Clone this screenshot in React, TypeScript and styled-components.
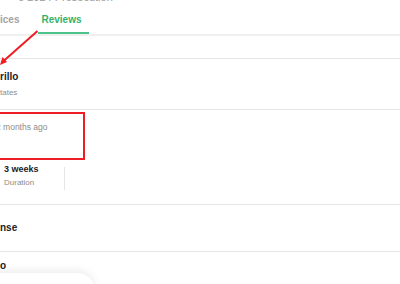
import React from "react";
import styled, { createGlobalStyle } from "styled-components";

const Global = createGlobalStyle`
  html, body { margin: 0; padding: 0; background: #ffffff; }
  body { overflow: hidden; font-family: "Liberation Sans", Arial, sans-serif; }
  #root { width: 400px; height: 284px; overflow: hidden; }
`;

const Page = styled.div`
  position: relative;
  width: 400px;
  height: 284px;
  overflow: hidden;
  display: flex;
  flex-direction: column;
`;

const TopLine = styled.div`
  margin-top: -9px;
  padding-left: 18px;
  font-size: 11px;
  line-height: 13px;
  color: #9a9a9a;
  white-space: nowrap;
`;

const TabBar = styled.div`
  display: flex;
  align-items: flex-end;
  gap: 19px;
  border-bottom: 2px solid #f0f0f0;
`;

const Tab = styled.div<{ $active?: boolean }>`
  padding: 8.5px ${(p) => (p.$active ? "7px" : "0")} 5.5px ${(p) => (p.$active ? "3px" : "0")};
  font-size: 10px;
  line-height: 14px;
  font-weight: 700;
  color: ${(p) => (p.$active ? "#34b36c" : "#a3a3a3")};
  border-bottom: 2px solid ${(p) => (p.$active ? "#4cc489" : "transparent")};
`;

const Blank = styled.div<{ $h: number }>`
  height: ${(p) => p.$h}px;
  border-bottom: 1px solid #e6e6e6;
  flex: none;
`;

const InfoRow = styled.div`
  display: flex;
  flex-direction: column;
  gap: 3.5px;
  padding: 10.5px 0 9.9px;
  border-bottom: 1px solid #e6e6e6;
  flex: none;
`;

const Title = styled.div`
  font-size: 10px;
  line-height: 14px;
  font-weight: 700;
  color: #222;
  white-space: nowrap;
`;

const Sub = styled.div`
  font-size: 8px;
  line-height: 12px;
  color: #8c8c8c;
  white-space: nowrap;
`;

const ReviewSection = styled.div`
  height: 95px;
  box-sizing: border-box;
  padding-top: 2px;
  border-bottom: 1px solid #e6e6e6;
  flex: none;
`;

const HighlightBox = styled.div`
  box-sizing: border-box;
  width: 97px;
  height: 48px;
  margin-left: -12px;
  padding: 7px 6px;
  border: 2px solid #ee1c24;
`;

const DateText = styled.div`
  font-size: 8.5px;
  line-height: 12px;
  color: #8c8c8c;
  white-space: nowrap;
`;

const StatsRow = styled.div`
  display: flex;
  margin-top: 3.5px;
`;

const Stat = styled.div`
  width: 60px;
  padding-left: 4px;
  display: flex;
  flex-direction: column;
  gap: 1.5px;
`;

const StatValue = styled.div`
  font-size: 9px;
  line-height: 12px;
  font-weight: 700;
  color: #222;
  white-space: nowrap;
`;

const StatLabel = styled.div`
  font-size: 8px;
  line-height: 11px;
  color: #8c8c8c;
`;

const StatDivider = styled.div`
  width: 1px;
  height: 23px;
  margin-top: 3.5px;
  background: #e6e6e6;
`;

const SimpleRow = styled.div<{ $h: number; $pt: number }>`
  height: ${(p) => p.$h}px;
  box-sizing: border-box;
  padding-top: ${(p) => p.$pt}px;
  border-bottom: 1px solid #e6e6e6;
  flex: none;
`;

const Arrow = styled.svg`
  position: absolute;
  left: 0;
  top: 0;
  pointer-events: none;
`;

const FloatingCard = styled.div`
  position: absolute;
  left: -30px;
  top: 273px;
  width: 125px;
  height: 40px;
  border-radius: 18px;
  background: #ffffff;
  box-shadow: 0 -3px 8px rgba(0, 0, 0, 0.07);
`;

export default function App() {
  return (
    <>
      <Global />
      <Page>
        <TopLine>e 2024 Prosecution</TopLine>
        <TabBar>
          <Tab>ices</Tab>
          <Tab $active>Reviews</Tab>
        </TabBar>
        <Blank $h={22} />
        <InfoRow>
          <Title>rillo</Title>
          <Sub>tates</Sub>
        </InfoRow>
        <ReviewSection>
          <HighlightBox>
            <DateText>2 months ago</DateText>
          </HighlightBox>
          <StatsRow>
            <Stat>
              <StatValue>3 weeks</StatValue>
              <StatLabel>Duration</StatLabel>
            </Stat>
            <StatDivider />
          </StatsRow>
        </ReviewSection>
        <SimpleRow $h={47} $pt={16}>
          <Title>nse</Title>
        </SimpleRow>
        <SimpleRow $h={40} $pt={7}>
          <Title>o</Title>
        </SimpleRow>
        <FloatingCard />
        <Arrow width="60" height="80" viewBox="0 0 60 80">
          <line x1="37.5" y1="31" x2="3" y2="61.5" stroke="#ee1c24" strokeWidth="2" />
          <polygon points="0,65 2.5,57 7,62" fill="#ee1c24" />
        </Arrow>
      </Page>
    </>
  );
}
